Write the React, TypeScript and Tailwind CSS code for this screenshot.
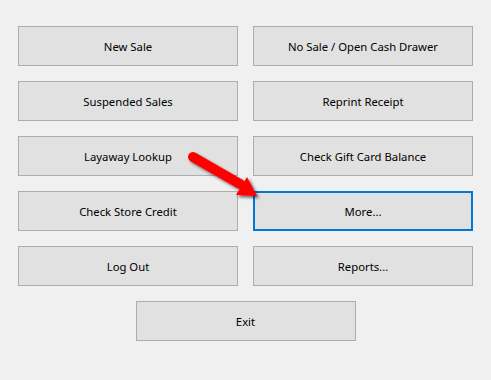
import React from "react";

const Btn = ({ label, focused }: { label: string; focused?: boolean }) => (
  <div
    className={
      "w-[220px] h-[40px] flex items-center justify-center bg-[#e1e1e1] text-[11.3px] text-black pt-[2px] " +
      (focused ? "border-2 border-[#0078d7]" : "border border-[#adadad]")
    }
  >
    {label}
  </div>
);

export default function App() {
  const rows = [
    ["New Sale", "No Sale / Open Cash Drawer"],
    ["Suspended Sales", "Reprint Receipt"],
    ["Layaway Lookup", "Check Gift Card Balance"],
    ["Check Store Credit", "More..."],
    ["Log Out", "Reports..."],
  ];
  return (
    <div
      className="relative w-[491px] h-[380px] bg-[#f0f0f0] pt-[26px] pl-[18px]"
      style={{ fontFamily: '"Segoe UI", "Noto Sans", sans-serif' }}
    >
      <div className="grid grid-cols-[220px_220px] gap-x-[15px] gap-y-[15px] w-[455px]">
        {rows.flat().map((l) => (
          <Btn key={l} label={l} focused={l === "More..."} />
        ))}
        <div className="col-span-2 flex justify-center">
          <Btn label="Exit" />
        </div>
      </div>
      <svg className="absolute left-0 top-0" width="491" height="380" viewBox="0 0 491 380">
        <defs>
          <filter id="sh" x="-20%" y="-20%" width="140%" height="140%">
            <feDropShadow dx="2" dy="2" stdDeviation="1.5" floodColor="#000" floodOpacity="0.6" />
          </filter>
        </defs>
        <g filter="url(#sh)">
          <line x1="193" y1="157" x2="240" y2="184" stroke="#ff0000" strokeWidth="10" strokeLinecap="round" />
          <polygon points="257,196 236,195 247,177" fill="#ff0000" />
        </g>
      </svg>
    </div>
  );
}
